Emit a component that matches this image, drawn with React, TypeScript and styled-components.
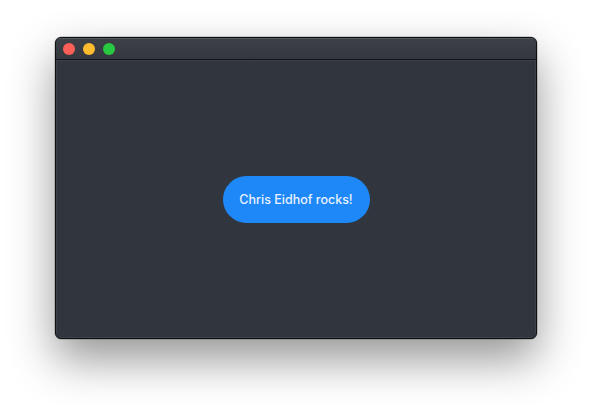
import styled, { createGlobalStyle } from 'styled-components'

const GlobalStyle = createGlobalStyle`
  html, body {
    margin: 0;
    padding: 0;
    background: #ffffff;
  }
  body {
    font-family: Inter, "Noto Sans", sans-serif;
  }
`

const Page = styled.div`
  display: flex;
  justify-content: center;
  padding-top: 37px;
  width: 592px;
  height: 412px;
  box-sizing: border-box;
`

const Window = styled.div`
  display: flex;
  flex-direction: column;
  width: 482px;
  height: 302px;
  box-sizing: border-box;
  border: 1px solid #0d0f12;
  border-radius: 6px;
  overflow: hidden;
  background: #31363e;
  box-shadow: 0 20px 45px rgba(0, 0, 0, 0.42), 0 0 0 0.5px rgba(0, 0, 0, 0.3);
`

const TitleBar = styled.div`
  display: flex;
  align-items: center;
  gap: 8px;
  height: 21px;
  padding-left: 7px;
  background: linear-gradient(#3d4147, #34383e);
  border-bottom: 1px solid #121417;
  box-shadow: inset 0 1px 0 rgba(255, 255, 255, 0.12);
`

const Light = styled.span<{ $color: string }>`
  width: 12px;
  height: 12px;
  border-radius: 50%;
  background: ${(p) => p.$color};
`

const Content = styled.div`
  flex: 1;
  display: flex;
  align-items: center;
  justify-content: center;
  box-shadow: inset 0 0 0 1px rgba(255, 255, 255, 0.06);
`

const PillButton = styled.button`
  border: none;
  height: 47px;
  width: 147px;
  padding: 0;
  border-radius: 24px;
  background: #1e88f8;
  color: #e9f1ff;
  font-family: Inter, "Noto Sans", sans-serif;
  font-size: 12.5px;
  font-weight: 500;
  cursor: pointer;
`

export default function App() {
  return (
    <>
      <GlobalStyle />
      <Page>
        <Window>
          <TitleBar>
            <Light $color="#fe5f57" />
            <Light $color="#febc2e" />
            <Light $color="#28c840" />
          </TitleBar>
          <Content>
            <PillButton>Chris Eidhof rocks!</PillButton>
          </Content>
        </Window>
      </Page>
    </>
  )
}
